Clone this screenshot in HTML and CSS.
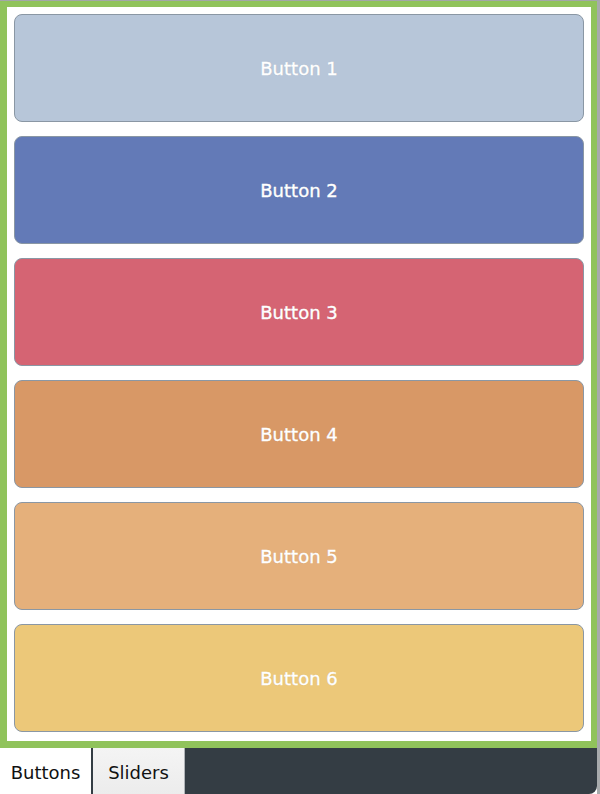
FILE: index.html
```html
<!DOCTYPE html>
<html>
<head>
<meta charset="utf-8">
<link rel="stylesheet" href="styles.css">
</head>
<body>
<div class="window">
  <div class="frame">
    <div class="btn b1">Button 1</div>
    <div class="btn b2">Button 2</div>
    <div class="btn b3">Button 3</div>
    <div class="btn b4">Button 4</div>
    <div class="btn b5">Button 5</div>
    <div class="btn b6">Button 6</div>
  </div>
  <div class="tabbar">
    <div class="tab active">Buttons</div>
    <div class="tab">Sliders</div>
  </div>
</div>
</body>
</html>
```
FILE: styles.css
```css
html, body {
  margin: 0;
  padding: 0;
  background: #ffffff;
}
.window {
  width: 600px;
  height: 794px;
  display: flex;
  flex-direction: column;
  background: #ffffff;
  border-top: 1px solid #a3a6a8;
  border-right: 3px solid #a7aaac;
  box-sizing: border-box;
  font-family: "DejaVu Sans", sans-serif;
}
.frame {
  height: 747px;
  box-sizing: border-box;
  border: 6px solid #90c35b;
  border-left-width: 7px;
  border-bottom-width: 7px;
  background: #ffffff;
  padding: 7px 7px 9px 7px;
  display: flex;
  flex-direction: column;
  gap: 14px;
}
.btn {
  height: 108px;
  box-sizing: border-box;
  border: 1px solid #8a97a4;
  border-radius: 8px;
  display: flex;
  align-items: center;
  justify-content: center;
  color: #ffffff;
  font-size: 18px;
  -webkit-text-stroke: 0.4px #ffffff;
  text-shadow: 0 0 1px rgba(0,0,0,0.2);
}
.b1 { background: #b7c6d9; }
.b2 { background: #637ab7; }
.b3 { background: #d56473; }
.b4 { background: #d89866; }
.b5 { background: #e5b07b; }
.b6 { background: #ecc879; }
.tabbar {
  flex: 1;
  background: #343d44;
  border-bottom-right-radius: 8px;
  display: flex;
  align-items: stretch;
}
.tab {
  width: 92px;
  box-sizing: border-box;
  display: flex;
  align-items: center;
  justify-content: center;
  font-size: 18px;
  color: #111111;
  background: linear-gradient(#f4f4f4, #ececec);
  border-right: 1px solid #b0b4b8;
  padding-top: 2px;
}
.tab.active {
  background: #ffffff;
  width: 93px;
  border-right: 2px solid #343d44;
}
```
